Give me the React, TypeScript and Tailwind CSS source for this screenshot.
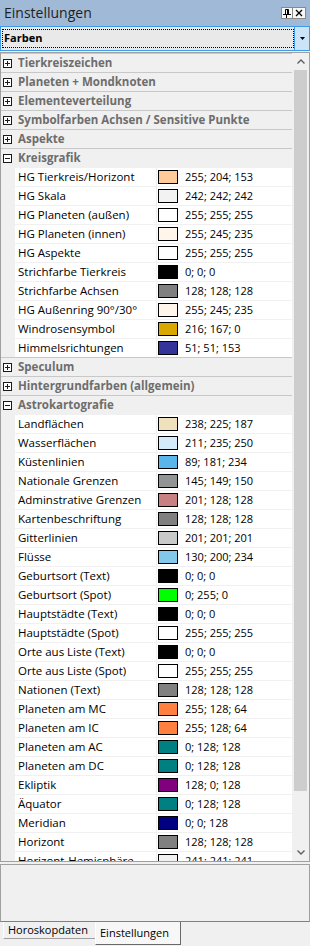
import React from "react";

type Item = { name: string; rgb: [number, number, number] };

const kreisgrafik: Item[] = [
  { name: "HG Tierkreis/Horizont", rgb: [255, 204, 153] },
  { name: "HG Skala", rgb: [242, 242, 242] },
  { name: "HG Planeten (außen)", rgb: [255, 255, 255] },
  { name: "HG Planeten (innen)", rgb: [255, 245, 235] },
  { name: "HG Aspekte", rgb: [255, 255, 255] },
  { name: "Strichfarbe Tierkreis", rgb: [0, 0, 0] },
  { name: "Strichfarbe Achsen", rgb: [128, 128, 128] },
  { name: "HG Außenring 90°/30°", rgb: [255, 245, 235] },
  { name: "Windrosensymbol", rgb: [216, 167, 0] },
  { name: "Himmelsrichtungen", rgb: [51, 51, 153] },
];

const astro: Item[] = [
  { name: "Landflächen", rgb: [238, 225, 187] },
  { name: "Wasserflächen", rgb: [211, 235, 250] },
  { name: "Küstenlinien", rgb: [89, 181, 234] },
  { name: "Nationale Grenzen", rgb: [145, 149, 150] },
  { name: "Adminstrative Grenzen", rgb: [201, 128, 128] },
  { name: "Kartenbeschriftung", rgb: [128, 128, 128] },
  { name: "Gitterlinien", rgb: [201, 201, 201] },
  { name: "Flüsse", rgb: [130, 200, 234] },
  { name: "Geburtsort (Text)", rgb: [0, 0, 0] },
  { name: "Geburtsort (Spot)", rgb: [0, 255, 0] },
  { name: "Hauptstädte (Text)", rgb: [0, 0, 0] },
  { name: "Hauptstädte (Spot)", rgb: [255, 255, 255] },
  { name: "Orte aus Liste (Text)", rgb: [0, 0, 0] },
  { name: "Orte aus Liste (Spot)", rgb: [255, 255, 255] },
  { name: "Nationen (Text)", rgb: [128, 128, 128] },
  { name: "Planeten am MC", rgb: [255, 128, 64] },
  { name: "Planeten am IC", rgb: [255, 128, 64] },
  { name: "Planeten am AC", rgb: [0, 128, 128] },
  { name: "Planeten am DC", rgb: [0, 128, 128] },
  { name: "Ekliptik", rgb: [128, 0, 128] },
  { name: "Äquator", rgb: [0, 128, 128] },
  { name: "Meridian", rgb: [0, 0, 128] },
  { name: "Horizont", rgb: [128, 128, 128] },
  { name: "Horizont-Hemisphäre", rgb: [241, 241, 241] },
];

function PlusMinus({ open }: { open: boolean }) {
  return (
    <svg width="9" height="9" viewBox="0 0 9 9" className="shrink-0">
      <rect x="0.5" y="0.5" width="8" height="8" fill="#fff" stroke="#1a1a1a" />
      <path d="M2 4.5h5" stroke="#1a1a1a" />
      {!open && <path d="M4.5 2v5" stroke="#1a1a1a" />}
    </svg>
  );
}

function Category({ label, open = false }: { label: string; open?: boolean }) {
  return (
    <div className="flex h-[19px] shrink-0 items-center border-t border-[#c8c8c8] bg-[#f0f0f0]">
      <div className="flex w-[17px] shrink-0 pl-[2px]">
        <PlusMinus open={open} />
      </div>
      <span className="whitespace-nowrap text-[11.5px] font-bold leading-[18px] text-[#6d6d6d]">{label}</span>
    </div>
  );
}

function Row({ item }: { item: Item }) {
  const [r, g, b] = item.rgb;
  return (
    <div className="flex h-[19px] shrink-0 border-t border-[#f0f0f0]">
      <div className="w-[14px] shrink-0 bg-[#f0f0f0]" />
      <div className="flex w-[142px] shrink-0 items-center border-r border-[#f0f0f0] bg-white pl-[3px]">
        <span className="whitespace-nowrap text-[11.5px] leading-[18px] text-black">{item.name}</span>
      </div>
      <div className="flex flex-1 items-center bg-white pl-[1px]">
        <div className="h-[14px] w-[20px] shrink-0 border border-black" style={{ backgroundColor: `rgb(${r},${g},${b})` }} />
        <span className="ml-[7px] whitespace-nowrap text-[11px] leading-[18px] text-black">
          {r}; {g}; {b}
        </span>
      </div>
    </div>
  );
}

function Chevron({ up }: { up?: boolean }) {
  return (
    <svg width="8" height="5" viewBox="0 0 8 5">
      <path d={up ? "M0.5 4.5L4 1l3.5 3.5" : "M0.5 0.5L4 4l3.5-3.5"} fill="none" stroke="#606060" strokeWidth="1.4" />
    </svg>
  );
}

export default function App() {
  return (
    <div className="flex h-[946px] w-[310px] flex-col overflow-hidden bg-[#f0f0f0] font-['Open_Sans',sans-serif]">
      {/* caption */}
      <div className="flex h-[26px] shrink-0 items-center bg-[#9fb9d7] pl-[4px] pr-[4px]">
        <span className="flex-1 text-[14px] leading-[20px] text-[#1e1e1e]">Einstellungen</span>
        <div className="flex">
          <div className="flex h-[12px] w-[12px] items-center justify-center border border-[#8a8a8a] bg-[#f7f7f7]">
            <svg width="8" height="9" viewBox="0 0 8 9">
              <path d="M2.5 0.5h3v5h-3z" fill="none" stroke="#000" />
              <path d="M4.5 0.5v5" stroke="#000" />
              <path d="M0 5.5h8" stroke="#000" />
              <path d="M3.5 5.5v3.5" stroke="#000" />
            </svg>
          </div>
          <div className="flex h-[12px] w-[13px] items-center justify-center border border-l-0 border-[#8a8a8a] bg-[#f7f7f7]">
            <svg width="8" height="8" viewBox="0 0 8 8">
              <path d="M1 1l6 6M7 1L1 7" stroke="#000" strokeWidth="1.3" />
            </svg>
          </div>
        </div>
      </div>

      {/* combobox */}
      <div className="flex h-[25px] shrink-0 border border-[#3d9be9] bg-[#e9e9e9]">
        <div className="my-[2px] ml-[1px] flex flex-1 items-center border border-dotted border-black pl-[1px]">
          <span className="text-[11px] font-bold text-black">Farben</span>
        </div>
        <div className="flex w-[15px] items-center justify-center border-l border-[#3d9be9] bg-[#cce4f7]">
          <svg width="5" height="3" viewBox="0 0 5 3">
            <path d="M0 0h5L2.5 3z" fill="#000" />
          </svg>
        </div>
      </div>

      {/* property grid */}
      <div className="mt-[1px] flex h-[810px] shrink-0 overflow-hidden border border-[#a0a0a0]">
        <div className="flex flex-1 flex-col overflow-hidden">
          <Category label="Tierkreiszeichen" />
          <Category label="Planeten + Mondknoten" />
          <Category label="Elementeverteilung" />
          <Category label="Symbolfarben Achsen / Sensitive Punkte" />
          <Category label="Aspekte" />
          <Category label="Kreisgrafik" open />
          {kreisgrafik.map((it) => (
            <Row key={it.name} item={it} />
          ))}
          <Category label="Speculum" />
          <Category label="Hintergrundfarben (allgemein)" />
          <Category label="Astrokartografie" open />
          {astro.map((it) => (
            <Row key={it.name} item={it} />
          ))}
        </div>
        <div className="flex w-[17px] shrink-0 flex-col bg-[#f0f0f0]">
          <div className="flex h-[17px] shrink-0 items-center justify-center">
            <Chevron up />
          </div>
          <div className="mx-[2px] h-[721px] shrink-0 bg-[#cdcdcd]" />
          <div className="flex-1" />
          <div className="flex h-[17px] shrink-0 items-center justify-center">
            <Chevron />
          </div>
        </div>
      </div>

      {/* description */}
      <div className="mt-[2px] h-[58px] shrink-0 border border-[#a0a0a0] border-b-[#808080] bg-[#f0f0f0]" />

      {/* tabs */}
      <div className="flex h-[24px] shrink-0 items-start pl-[3px]">
        <div className="flex h-[17px] w-[92px] items-center border-b border-l border-[#a0a0a0] border-l-white pl-[4px]">
          <span className="text-[11px] leading-[16px] text-black">Horoskopdaten</span>
        </div>
        <div className="flex h-[23px] w-[86px] items-center border-b border-l border-r border-[#696969] border-l-white bg-[#f7f7f7] pl-[4px]">
          <span className="text-[11px] leading-[16px] text-black">Einstellungen</span>
        </div>
      </div>
    </div>
  );
}
